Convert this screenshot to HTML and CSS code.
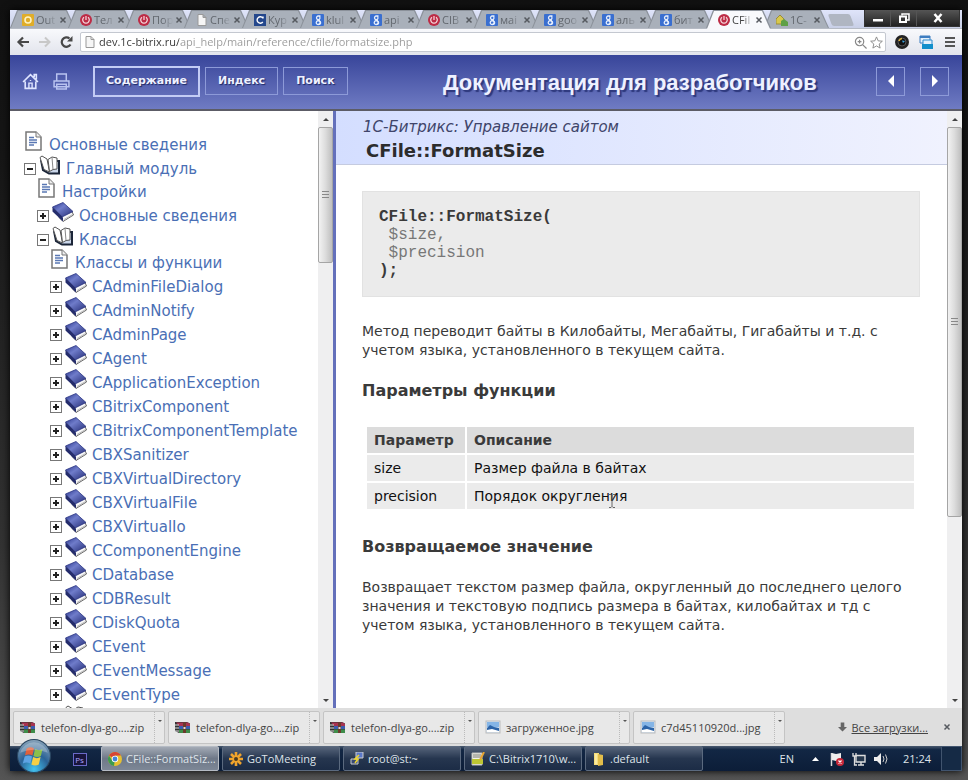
FILE: index.html
```html
<!DOCTYPE html>
<html lang="ru">
<head>
    <meta charset="UTF-8">
    <meta name="viewport" content="width=device-width, initial-scale=1.0">
    <title>CFile::FormatSize</title>
    <link rel="stylesheet" href="styles.css">
</head>
<body>
    <!-- Shared icons -->
    <svg class="sprite" width="0" height="0" aria-hidden="true">
        <defs>
            <linearGradient id="cover" x1="0" y1="0" x2="1" y2="1">
                <stop offset="0" stop-color="#28348c"/>
                <stop offset="0.4" stop-color="#6f7cca"/>
                <stop offset="1" stop-color="#232b74"/>
            </linearGradient>
            <radialGradient id="orb" cx="0.5" cy="0.9" r="0.9">
                <stop offset="0" stop-color="#43c4f0"/>
                <stop offset="0.5" stop-color="#2b6397"/>
                <stop offset="1" stop-color="#8aa5bb"/>
            </radialGradient>
        </defs>
        <symbol id="i-doc" viewBox="0 0 17 20">
            <path d="M1 1h10l5 5v13H1z" fill="#fff" stroke="#777" stroke-width="1.5"/>
            <path d="M11 1v5h5" fill="#eee" stroke="#777"/>
            <path d="M4 6.500h5M4 9h8M4 11.500h8M4 14h5" stroke="#5a78b4" stroke-width="1.300"/>
        </symbol>
        <symbol id="i-book" viewBox="0 0 22 20">
            <path d="M7 15.500L20 9.500l1.500 3.500L11 19.500z" fill="#f8f8f8" stroke="#444" stroke-width="0.800"/>
            <path d="M0.500 5L11 0.500l10 9-11 5.500z" fill="url(#cover)" stroke="#2c3684" stroke-width="0.800"/>
            <path d="M0.500 5v4.500L11 19.500V15.500z" fill="#242c6c"/>
            <path d="M12 17.500l8.500-5" stroke="#aaa" stroke-width="0.800"/>
        </symbol>
        <symbol id="i-open" viewBox="0 0 22 20">
            <path d="M2 5l2 10 6 3.500h10V6h-2" fill="#cbd7ea" stroke="#1b2538" stroke-width="2"/>
            <path d="M1 2.500L3 1l5 3 2.500 13-5.500-2.500z" fill="#fff" stroke="#555"/>
            <path d="M10.500 16.500L9 4.500 13 2l5 1v11l-4 .5z" fill="#fff" stroke="#555"/>
            <path d="M13 2.500l1 12" stroke="#888"/>
        </symbol>
        <symbol id="i-bitrix" viewBox="0 0 12 12">
            <circle cx="6" cy="6" r="6" fill="#bd2c46"/>
            <path d="M4 3.200a3.300 3.300 0 1 0 4 0M6 2v4" fill="none" stroke="#f8dce0" stroke-width="1.200"/>
        </symbol>
        <symbol id="i-google" viewBox="0 0 12 12">
            <rect width="12" height="12" rx="1" fill="#3a6fd0"/>
            <path d="M8.500 2H6.200a1.800 1.800 0 1 0 .3 3.600L6 6.500a2 2 0 1 1-1.500 3.200 2 2 0 0 1 2-3" fill="none" stroke="#e6eefc" stroke-width="1.300"/>
            <path d="M7 2.200a1.800 1.800 0 0 1-.5 3.400L7.800 7.200a1.700 1.700 0 0 1-1.800 3" fill="none" stroke="#e6eefc" stroke-width="1.200"/>
        </symbol>
        <symbol id="i-file" viewBox="0 0 12 12">
            <path d="M2 .5h5L10 3.500v8H2zM7 .5v3h3" fill="#f6f6f6" stroke="#999"/>
        </symbol>
        <symbol id="i-close" viewBox="0 0 8 8">
            <path d="M1.500 1.500l5 5M6.500 1.500l-5 5" stroke="#565a60" stroke-width="1.500"/>
        </symbol>
        <symbol id="i-zip" viewBox="0 0 16 14">
            <path d="M0 2h12l3 1.500v9.500H4L0 11z" fill="#333"/>
            <path d="M1 2.500h12l2 1.500v2H4z" fill="#a83250"/>
            <path d="M4 6h11v3H4z" fill="#3c5cae"/>
            <path d="M4 9.500h11V13H4z" fill="#3f8d4a"/>
            <path d="M0 5h4M0 8h4M0 11h4" stroke="#ddd" stroke-width="1"/>
            <path d="M8 2.500h3V13H8z" fill="#6b3b2c"/>
            <path d="M8.500 7h2v2h-2z" fill="#ddd"/>
        </symbol>
        <symbol id="i-image" viewBox="0 0 16 14">
            <rect x="1" y="1" width="14" height="12" fill="#d8e8f8" stroke="#bbb"/>
            <path d="M2 2h12v5H2z" fill="#85b5e6"/>
            <path d="M2 8l3-3 4 2 5 1v4H2z" fill="#2c64a8"/>
            <path d="M2 10l5-1 7 2v1H2z" fill="#fff"/>
        </symbol>
    </svg>

    <div class="window">
        <div class="tab-strip">
            <div class="tab"><svg class="favicon" viewBox="0 0 12 12"><rect width="12" height="12" rx="1" fill="#e0ad28"/><circle cx="6" cy="6" r="3" fill="none" stroke="#fff3c0" stroke-width="1.600"/></svg><span class="tab-title">Out</span><button class="tab-close" aria-label="Закрыть"><svg><use href="#i-close"/></svg></button></div>
            <div class="tab"><svg class="favicon"><use href="#i-bitrix"/></svg><span class="tab-title">Тел</span><button class="tab-close" aria-label="Закрыть"><svg><use href="#i-close"/></svg></button></div>
            <div class="tab"><svg class="favicon"><use href="#i-bitrix"/></svg><span class="tab-title">Пор</span><button class="tab-close" aria-label="Закрыть"><svg><use href="#i-close"/></svg></button></div>
            <div class="tab"><svg class="favicon"><use href="#i-file"/></svg><span class="tab-title">Спе</span><button class="tab-close" aria-label="Закрыть"><svg><use href="#i-close"/></svg></button></div>
            <div class="tab"><svg class="favicon" viewBox="0 0 12 12"><rect width="12" height="12" fill="#24478c"/><path d="M8.800 4a3.200 3.200 0 1 0 0 4M9 2.500v2" fill="none" stroke="#fff" stroke-width="1.400"/></svg><span class="tab-title">Кур</span><button class="tab-close" aria-label="Закрыть"><svg><use href="#i-close"/></svg></button></div>
            <div class="tab"><svg class="favicon"><use href="#i-google"/></svg><span class="tab-title">klul</span><button class="tab-close" aria-label="Закрыть"><svg><use href="#i-close"/></svg></button></div>
            <div class="tab"><svg class="favicon"><use href="#i-google"/></svg><span class="tab-title">api</span><button class="tab-close" aria-label="Закрыть"><svg><use href="#i-close"/></svg></button></div>
            <div class="tab"><svg class="favicon"><use href="#i-bitrix"/></svg><span class="tab-title">CIB</span><button class="tab-close" aria-label="Закрыть"><svg><use href="#i-close"/></svg></button></div>
            <div class="tab"><svg class="favicon"><use href="#i-google"/></svg><span class="tab-title">маі</span><button class="tab-close" aria-label="Закрыть"><svg><use href="#i-close"/></svg></button></div>
            <div class="tab"><svg class="favicon"><use href="#i-google"/></svg><span class="tab-title">goo</span><button class="tab-close" aria-label="Закрыть"><svg><use href="#i-close"/></svg></button></div>
            <div class="tab"><svg class="favicon"><use href="#i-google"/></svg><span class="tab-title">аль</span><button class="tab-close" aria-label="Закрыть"><svg><use href="#i-close"/></svg></button></div>
            <div class="tab"><svg class="favicon"><use href="#i-google"/></svg><span class="tab-title">бит</span><button class="tab-close" aria-label="Закрыть"><svg><use href="#i-close"/></svg></button></div>
            <div class="tab active"><svg class="favicon"><use href="#i-bitrix"/></svg><span class="tab-title">CFil</span><button class="tab-close" aria-label="Закрыть"><svg><use href="#i-close"/></svg></button></div>
            <div class="tab"><svg class="favicon" viewBox="0 0 12 12"><path d="M0 5l4-4 4 4v5H0z" fill="#d8c84c" stroke="#9a8c3a"/><path d="M5 7l3-2 4 3v4H5z" fill="#5fa046"/></svg><span class="tab-title">1C-</span><button class="tab-close" aria-label="Закрыть"><svg><use href="#i-close"/></svg></button></div>
            <button class="new-tab" aria-label="Новая вкладка"></button>
            <div class="window-controls">
                <button aria-label="Свернуть"><svg viewBox="0 0 12 10"><path d="M1 6h10v2.500H1z" fill="#fff"/></svg></button>
                <button aria-label="Развернуть"><svg viewBox="0 0 12 10"><path d="M4 2.500V1h7v6H9" fill="none" stroke="#fff" stroke-width="1.500"/><path d="M2 3.500h6V9H2z" fill="none" stroke="#fff" stroke-width="2"/></svg></button>
                <button class="wide" aria-label="Закрыть окно"><svg viewBox="0 0 12 10"><path d="M2.500 1l7 8M9.500 1l-7 8" stroke="#fff" stroke-width="2.500"/></svg></button>
            </div>
        </div>

        <div class="toolbar">
            <button class="nav-button" aria-label="Назад"><svg viewBox="0 0 14 12"><path d="M13 6H3M7 1.500L2.500 6 7 10.500" fill="none" stroke="#484848" stroke-width="2.200"/></svg></button>
            <button class="nav-button" aria-label="Вперёд"><svg viewBox="0 0 14 12"><path d="M1 6h10M7 1.500L11.500 6 7 10.500" fill="none" stroke="#c8c8c8" stroke-width="2"/></svg></button>
            <button class="nav-button" aria-label="Обновить"><svg viewBox="0 0 14 12"><path d="M10.500 8.500A4.700 4.700 0 1 1 9.500 2.500" fill="none" stroke="#484848" stroke-width="2.200"/><path d="M12.500 0v5.500H7z" fill="#484848"/></svg></button>
            <div class="omnibox">
                <svg class="favicon"><use href="#i-file"/></svg>
                <input class="url" type="text" aria-label="Адрес" value="dev.1c-bitrix.ru/api_help/main/reference/cfile/formatsize.php">
                <svg class="omni-icon" viewBox="0 0 14 14"><circle cx="6" cy="6" r="4.500" fill="none" stroke="#888" stroke-width="1.300"/><path d="M9.500 9.500l4 4M4 6h4M6 4v4" stroke="#888" stroke-width="1.300"/></svg>
                <svg class="omni-icon" viewBox="0 0 14 14"><path d="M7 1l1.800 4.200 4.500.4-3.400 3 1 4.400L7 10.700 3.100 13l1-4.400-3.400-3 4.500-.4z" fill="#fff" stroke="#888"/></svg>
            </div>
            <button class="extension" aria-label="Камера"><svg viewBox="0 0 14 14"><circle cx="7" cy="7" r="7" fill="#222"/><circle cx="7" cy="7" r="4" fill="#111" stroke="#555"/><path d="M4 6a3.500 3.500 0 0 1 3-2.500" stroke="#e4b640" stroke-width="1.500" fill="none"/><path d="M7 5.500l3 .5-2 2z" fill="#3ca4e0"/></svg></button>
            <button class="extension" aria-label="Окна"><svg viewBox="0 0 14 14"><path d="M1 1h10v7H1z" fill="#e4f0fb" stroke="#3d7cc0"/><path d="M1 1h10v2H1z" fill="#3d7cc0"/><path d="M4 5h9v7H4z" fill="#e4f0fb" stroke="#2e8dce"/><path d="M3 9h11v5H3z" fill="#128fcb"/></svg></button>
            <button class="extension" aria-label="Меню"><svg viewBox="0 0 14 14"><path d="M2 3h10M2 7h10M2 11h10" stroke="#555" stroke-width="2.200"/></svg></button>
        </div>

        <header class="site-header">
            <a class="header-icon" href="#" aria-label="Главная"><svg viewBox="0 0 16 16"><path d="M1 8.500L8 1.500l7 7M3 8v6.500h10V8M11.500 4V1.500h2V6" fill="none" stroke="#dfe5ff" stroke-width="1.500"/><path d="M6.500 14V9.500h3V14M8 6.500v1" fill="none" stroke="#dfe5ff" stroke-width="1.300"/></svg></a>
            <a class="header-icon" href="#" aria-label="Печать"><svg viewBox="0 0 16 16"><path d="M3.500 7V1h9v6M1 7.500h14v5.500H1zM3.500 10.500h9V15h-9z" fill="none" stroke="#b9c3f0" stroke-width="1.400"/></svg></a>
            <button class="header-button selected">Содержание</button>
            <button class="header-button">Индекс</button>
            <button class="header-button">Поиск</button>
            <h2 class="site-title">Документация для разработчиков</h2>
            <button class="page-arrow" aria-label="Предыдущая"><svg viewBox="0 0 8 12"><path d="M7 0v12L1 6z" fill="#fff"/></svg></button>
            <button class="page-arrow" aria-label="Следующая"><svg viewBox="0 0 8 12"><path d="M1 0v12l6-6z" fill="#fff"/></svg></button>
        </header>

        <div class="content">
            <nav class="sidebar">
                <ul class="tree">
                    <li><div class="row"><svg class="doc"><use href="#i-doc"/></svg><a href="#">Основные сведения</a></div></li>
                    <li>
                        <div class="row"><button class="toggle minus" aria-label="Свернуть"></button><svg class="book"><use href="#i-open"/></svg><a href="#">Главный модуль</a></div>
                        <ul>
                            <li><div class="row"><svg class="doc"><use href="#i-doc"/></svg><a href="#">Настройки</a></div></li>
                            <li><div class="row"><button class="toggle" aria-label="Развернуть"></button><svg class="book"><use href="#i-book"/></svg><a href="#">Основные сведения</a></div></li>
                            <li>
                                <div class="row"><button class="toggle minus" aria-label="Свернуть"></button><svg class="book"><use href="#i-open"/></svg><a href="#">Классы</a></div>
                                <ul>
                                    <li><div class="row"><svg class="doc"><use href="#i-doc"/></svg><a href="#">Классы и функции</a></div></li>
                                    <li><div class="row"><button class="toggle" aria-label="Развернуть"></button><svg class="book"><use href="#i-book"/></svg><a href="#">CAdminFileDialog</a></div></li>
                                    <li><div class="row"><button class="toggle" aria-label="Развернуть"></button><svg class="book"><use href="#i-book"/></svg><a href="#">CAdminNotify</a></div></li>
                                    <li><div class="row"><button class="toggle" aria-label="Развернуть"></button><svg class="book"><use href="#i-book"/></svg><a href="#">CAdminPage</a></div></li>
                                    <li><div class="row"><button class="toggle" aria-label="Развернуть"></button><svg class="book"><use href="#i-book"/></svg><a href="#">CAgent</a></div></li>
                                    <li><div class="row"><button class="toggle" aria-label="Развернуть"></button><svg class="book"><use href="#i-book"/></svg><a href="#">CApplicationException</a></div></li>
                                    <li><div class="row"><button class="toggle" aria-label="Развернуть"></button><svg class="book"><use href="#i-book"/></svg><a href="#">CBitrixComponent</a></div></li>
                                    <li><div class="row"><button class="toggle" aria-label="Развернуть"></button><svg class="book"><use href="#i-book"/></svg><a href="#">CBitrixComponentTemplate</a></div></li>
                                    <li><div class="row"><button class="toggle" aria-label="Развернуть"></button><svg class="book"><use href="#i-book"/></svg><a href="#">CBXSanitizer</a></div></li>
                                    <li><div class="row"><button class="toggle" aria-label="Развернуть"></button><svg class="book"><use href="#i-book"/></svg><a href="#">CBXVirtualDirectory</a></div></li>
                                    <li><div class="row"><button class="toggle" aria-label="Развернуть"></button><svg class="book"><use href="#i-book"/></svg><a href="#">CBXVirtualFile</a></div></li>
                                    <li><div class="row"><button class="toggle" aria-label="Развернуть"></button><svg class="book"><use href="#i-book"/></svg><a href="#">CBXVirtualIo</a></div></li>
                                    <li><div class="row"><button class="toggle" aria-label="Развернуть"></button><svg class="book"><use href="#i-book"/></svg><a href="#">CComponentEngine</a></div></li>
                                    <li><div class="row"><button class="toggle" aria-label="Развернуть"></button><svg class="book"><use href="#i-book"/></svg><a href="#">CDatabase</a></div></li>
                                    <li><div class="row"><button class="toggle" aria-label="Развернуть"></button><svg class="book"><use href="#i-book"/></svg><a href="#">CDBResult</a></div></li>
                                    <li><div class="row"><button class="toggle" aria-label="Развернуть"></button><svg class="book"><use href="#i-book"/></svg><a href="#">CDiskQuota</a></div></li>
                                    <li><div class="row"><button class="toggle" aria-label="Развернуть"></button><svg class="book"><use href="#i-book"/></svg><a href="#">CEvent</a></div></li>
                                    <li><div class="row"><button class="toggle" aria-label="Развернуть"></button><svg class="book"><use href="#i-book"/></svg><a href="#">CEventMessage</a></div></li>
                                    <li><div class="row"><button class="toggle" aria-label="Развернуть"></button><svg class="book"><use href="#i-book"/></svg><a href="#">CEventType</a></div></li>
                                    <li><div class="row"><button class="toggle minus" aria-label="Свернуть"></button><svg class="book"><use href="#i-open"/></svg></div></li>
                                </ul>
                            </li>
                        </ul>
                    </li>
                </ul>
            </nav>
            <div class="scrollbar"><span class="arrow up"></span><div class="track"><div class="thumb short"></div></div><span class="arrow down"></span></div>

            <main class="page">
                <div class="page-head">
                    <p class="product">1С-Битрикс: Управление сайтом</p>
                    <h1>CFile::FormatSize</h1>
                </div>
                <article class="article">
                    <pre class="syntax"><b>CFile::FormatSize(</b>
 $size,
 $precision
<b>);</b></pre>
                    <p>Метод переводит байты в Килобайты, Мегабайты, Гигабайты и т.д. с учетом языка, установленного в текущем сайта.</p>
                    <h3>Параметры функции</h3>
                    <table class="params">
                        <tr><th>Параметр</th><th>Описание</th></tr>
                        <tr><td>size</td><td>Размер файла в байтах</td></tr>
                        <tr><td>precision</td><td><span class="pointed">Порядок округления<svg class="cursor" viewBox="0 0 6 14"><path d="M0 .5h2l1 1 1-1h2M0 13.500h2l1-1 1 1h2M3 1.500v11" fill="none" stroke="#666"/></svg></span></td></tr>
                    </table>
                    <h3>Возвращаемое значение</h3>
                    <p>Возвращает текстом размер файла, округленный до последнего целого значения и текстовую подпись размера в байтах, килобайтах и тд с учетом языка, установленного в текущем сайта.</p>
                </article>
            </main>
            <div class="scrollbar"><span class="arrow up"></span><div class="track"><div class="thumb long"></div></div><span class="arrow down"></span></div>
        </div>

        <div class="downloads">
            <div class="download"><svg><use href="#i-zip"/></svg><span>telefon-dlya-go....zip</span><button aria-label="Действия"></button></div>
            <div class="download"><svg><use href="#i-zip"/></svg><span>telefon-dlya-go....zip</span><button aria-label="Действия"></button></div>
            <div class="download"><svg><use href="#i-zip"/></svg><span>telefon-dlya-go....zip</span><button aria-label="Действия"></button></div>
            <div class="download"><svg><use href="#i-image"/></svg><span>загруженное.jpg</span><button aria-label="Действия"></button></div>
            <div class="download"><svg><use href="#i-image"/></svg><span>c7d45110920d...jpg</span><button aria-label="Действия"></button></div>
            <svg class="down-arrow" viewBox="0 0 10 10"><path d="M3 0h4v5h3L5 10 0 5h3z" fill="#666"/></svg>
            <a class="all-downloads" href="#">Все загрузки...</a>
            <button class="tab-close" aria-label="Закрыть панель"><svg><use href="#i-close"/></svg></button>
        </div>

        <div class="taskbar">
            <button class="start" aria-label="Пуск"><svg viewBox="0 0 32 32"><circle cx="16" cy="16" r="15.500" fill="url(#orb)" stroke="#2a4660"/><path d="M9 9q4-2.500 7 0l-1.500 6.500q-3.500-2-7 0z" fill="#e2603a"/><path d="M17 9.500q4 2 7 0L22.500 16q-3.500 2-7 0z" fill="#8cc04a"/><path d="M7.200 16.500q3.500-2 7 0L12.500 23q-3.500-2-7 0z" fill="#5ea4e4"/><path d="M15.200 17q3.500 2 7 0L20.500 24q-3.500 2-7 0z" fill="#f6cf45"/><path d="M3 13a13.500 13.500 0 0 1 26 0q-13-6-26 0z" fill="#fff" opacity="0.250"/></svg></button>
            <button class="pinned" aria-label="Photoshop"><span>Ps</span></button>
            <button class="task current"><svg viewBox="0 0 14 14"><circle cx="7" cy="7" r="7" fill="#e5c032"/><path d="M7 7L1 3.400A7 7 0 0 1 13 3.500H7z" fill="#d64535"/><path d="M7 7l-1 7A7 7 0 0 1 1 3.400L4.200 8.500z" fill="#3c9b50"/><circle cx="7" cy="7" r="3.200" fill="#fff"/><circle cx="7" cy="7" r="2.400" fill="#4383d8"/></svg><span>CFile::FormatSiz...</span></button>
            <button class="task"><svg viewBox="0 0 14 14"><path d="M7 0v14M0 7h14M2 2l10 10M12 2L2 12" stroke="#f0a42c" stroke-width="2.600"/><circle cx="7" cy="7" r="2" fill="#4a3c22"/></svg><span>GoToMeeting</span></button>
            <button class="task"><svg viewBox="0 0 14 14"><path d="M6 0h7v6H6z" fill="#5a78c8" stroke="#ccc"/><path d="M1 7h7v5H1z" fill="#384a74" stroke="#ccc"/><path d="M9 3L5 7h3l-3 4" fill="none" stroke="#f2d72e" stroke-width="1.500"/></svg><span>root@st:~</span></button>
            <button class="task"><svg viewBox="0 0 14 14"><path d="M1 1h10v12H1z" fill="#f3f3e4" stroke="#bbb"/><path d="M1 7h11v5H1z" fill="#bcc634"/><path d="M2 3h8M2 5h8" stroke="#777"/><path d="M13 0L9 8" stroke="#e7a430" stroke-width="2"/></svg><span>C:\Bitrix1710\w...</span></button>
            <button class="task"><svg viewBox="0 0 14 14"><path d="M2 1h5v12H2z" fill="#f5dd7a"/><path d="M6 2l5 1v10l-5 1z" fill="#e2bd4a"/><path d="M4 2v10" stroke="#fff6c8"/></svg><span>.default</span></button>
            <div class="tray">
                <span class="lang">EN</span>
                <svg viewBox="0 0 14 14"><path d="M4 9l3.500-4L11 9z" fill="#fff"/></svg>
                <svg viewBox="0 0 14 14"><path d="M1.500 1v13" stroke="#ddd" stroke-width="1.500"/><path d="M2 1l4 1 5-1v7l-5 1-4-1z" fill="#eee"/><circle cx="10" cy="10" r="4" fill="#c8283a"/><path d="M8.500 8.500l3 3M11.500 8.500l-3 3" stroke="#fff" stroke-width="1.200"/></svg>
                <svg viewBox="0 0 14 14"><path d="M4 3.500h9V10H4zM6 13h6M9 10v3" fill="#26384e" stroke="#ddd" stroke-width="1.400"/><path d="M1 1v3h3V1M2.500 4v9H5" fill="none" stroke="#ddd" stroke-width="1.300"/></svg>
                <svg viewBox="0 0 14 14"><path d="M0 5h3l4-4v12L3 9H0z" fill="#eee"/><path d="M9 4q2 3 0 6M11.500 2.500q3 4.500 0 9" fill="none" stroke="#ccc"/></svg>
                <span class="clock">21:24</span>
            </div>
            <button class="show-desktop" aria-label="Показать рабочий стол"></button>
        </div>
    </div>
</body>
</html>
```

FILE: styles.css
```css
:root {
    --link: #4a6fb5;
    --text: #3a3a3a;
    --header-top: #38459a;
    --header-bottom: #6f7bc3;
    --box: #ebebeb;
    --ui-font: "Open Sans", "Noto Sans", sans-serif;
    --page-font: "DejaVu Sans", Verdana, sans-serif;
}

* {
    margin: 0;
    padding: 0;
    box-sizing: border-box;
}

body {
    height: 100vh;
    padding: 10px 6px 9px 10px;
    background: linear-gradient(#111, #161616 20%, #333 70%, #555);
    font-family: var(--ui-font);
    font-size: 11px;
    overflow: hidden;
}

button {
    border: 0;
    background: none;
    font: inherit;
    color: inherit;
    cursor: pointer;
}

.sprite {
    position: absolute;
}

.window {
    display: flex;
    flex-direction: column;
    height: 100%;
    box-shadow: 0 0 8px #000;
}

/* Browser tabs */
.tab-strip {
    display: flex;
    height: 19px;
    padding-left: 2px;
    background: linear-gradient(#dfe4fa, #c8cfe6);
    border-bottom: 1px solid #b5bac4;
}

.tab {
    position: relative;
    z-index: 0;
    display: flex;
    align-items: center;
    gap: 2px;
    width: 58px;
    padding: 2px 4px 0 10px;
    color: #62676e;
}

.tab::before,
.tab::after {
    content: "";
    position: absolute;
    z-index: -1;
    top: 0;
    bottom: 0;
    left: -2px;
    right: -5px;
    background: #8b919a;
    clip-path: polygon(0 100%, 7px 0, calc(100% - 8px) 0, 100% 100%);
}

.tab::after {
    top: 1px;
    left: -1px;
    right: -4px;
    background: #a9b0ba;
}

.tab.active {
    z-index: 1;
    color: #444;
}

.tab.active::after {
    background: #f8f9fc;
    bottom: -1px;
}

.favicon {
    flex: none;
    width: 12px;
    height: 12px;
}

.tab-title {
    flex: none;
    min-width: 21px;
    white-space: nowrap;
    line-height: 16px;
    -webkit-mask-image: linear-gradient(90deg, #000 50%, transparent);
    mask-image: linear-gradient(90deg, #000 50%, transparent);
}

.tab-close {
    flex: none;
    width: 8px;
    height: 8px;
    line-height: 0;
}

.tab-close svg {
    width: 8px;
    height: 8px;
}

.new-tab {
    width: 22px;
    height: 12px;
    margin: 4px 0 0 6px;
    border-radius: 2px;
    background: #b0b6c2;
    transform: skewX(20deg);
}

.window-controls {
    display: flex;
    margin-left: auto;
    margin-right: 2px;
    height: 17px;
    background: linear-gradient(#555, #222);
    border: 1px solid #333;
    border-top: 0;
}

.window-controls button {
    width: 26px;
    border-right: 1px solid #555;
}

.window-controls .wide {
    width: 42px;
    border-right: 0;
}

.window-controls svg {
    width: 12px;
    height: 10px;
}

/* Address bar */
.toolbar {
    display: flex;
    align-items: center;
    height: 26px;
    padding: 0 0 0 2px;
    background: linear-gradient(#f8f9fc, #e2e4ec);
}

.nav-button {
    width: 22px;
    height: 20px;
    line-height: 0;
}

.nav-button svg {
    width: 14px;
    height: 12px;
}

.omnibox {
    display: flex;
    flex: 1;
    align-items: center;
    gap: 3px;
    height: 20px;
    margin: 0 4px 0 2px;
    padding: 0 2px 0 3px;
    background: #fff;
    border: 1px solid #c4c8d0;
    border-radius: 2px;
}

/* host part is dark, the path after it is grey */
.url {
    flex: 1;
    border: 0;
    outline: 0;
    font: 11px/18px var(--ui-font);
    background: linear-gradient(90deg, #333 80px, #999 80px);
    -webkit-background-clip: text;
    background-clip: text;
    -webkit-text-fill-color: transparent;
}

.omni-icon {
    width: 13px;
    height: 13px;
}

.extension {
    width: 24px;
    line-height: 0;
}

.extension svg {
    width: 14px;
    height: 14px;
}

/* Documentation header */
.site-header {
    display: flex;
    align-items: center;
    gap: 5px;
    height: 56px;
    padding: 0 13px 2px 12px;
    background: linear-gradient(var(--header-top), var(--header-bottom));
    border-bottom: 2px solid #5c5c66;
    color: #eef1ff;
}

.header-icon {
    width: 26px;
    line-height: 0;
}

.header-icon svg {
    width: 17px;
    height: 17px;
}

.header-button {
    height: 28px;
    padding: 0 12px;
    border: 1px solid #8d9ad8;
    font: bold 11px/26px var(--page-font);
    text-shadow: 1px 1px 1px #1e2864;
}

.header-button.selected {
    height: 31px;
    padding: 0 11px;
    margin-left: 9px;
    border: 2px solid #c3ccf5;
}

.site-title {
    flex: 1;
    padding: 4px 0 0 36px;
    font: bold 22px/28px "Liberation Sans", Arial, sans-serif;
    text-align: center;
    white-space: nowrap;
    text-shadow: 2px 2px 1px #2d387c;
}

.page-arrow {
    width: 29px;
    height: 29px;
    border: 1px solid #8d9ad8;
    line-height: 0;
}

.page-arrow + .page-arrow {
    margin-left: 10px;
}

.page-arrow svg {
    width: 8px;
    height: 12px;
}

/* Frames */
.content {
    display: flex;
    flex: 1;
    min-height: 0;
    background: #fff;
}

.sidebar {
    width: 308px;
    padding: 22px 0 0 14px;
    overflow: hidden;
}

.tree,
.tree ul {
    list-style: none;
}

.tree ul {
    margin-top: -1px;
    padding-left: 13px;
}

.row {
    display: flex;
    align-items: center;
    height: 24px;
    font: 15px/24px var(--page-font);
    white-space: nowrap;
}

.row a {
    color: var(--link);
    text-decoration: none;
}

.row a:hover {
    text-decoration: underline;
}

.doc {
    width: 17px;
    height: 20px;
    margin: 0 7px 8px 1px;
}

.book {
    width: 22px;
    height: 20px;
    margin: 0 5px 9px 3px;
}

.toggle {
    flex: none;
    width: 12px;
    height: 12px;
    border: 1px solid #777;
    background:
        linear-gradient(#222, #222) center / 6px 2px no-repeat,
        linear-gradient(#222, #222) center / 2px 6px no-repeat,
        #fff;
}

.toggle.minus {
    background: linear-gradient(#222, #222) center / 6px 2px no-repeat, #fff;
}

.scrollbar {
    display: flex;
    flex-direction: column;
    flex: none;
    width: 15px;
    background: #efeff0;
}

.sidebar + .scrollbar {
    width: 18px;
    border-right: 3px solid #6470bb;
}

.arrow {
    height: 16px;
    display: flex;
    align-items: center;
    justify-content: center;
}

.arrow::before {
    content: "";
    border: 3px solid transparent;
}

.arrow.up::before {
    border-top: 0;
    border-bottom-color: #444;
}

.arrow.down::before {
    border-bottom: 0;
    border-top-color: #444;
}

.track {
    flex: 1;
}

.thumb {
    display: flex;
    align-items: center;
    justify-content: center;
    border: 1px solid #a5a5a5;
    border-radius: 2px;
    background: linear-gradient(90deg, #f2f2f2, #dcdcdc 50%, #bfbfbf);
}

.thumb::before {
    content: "";
    width: 7px;
    height: 8px;
    background: repeating-linear-gradient(#888 0 1px, transparent 1px 3px);
}

.thumb.short {
    height: 24%;
}

.thumb.long {
    height: 69%;
}

/* Article */
.page {
    flex: 1;
    min-width: 0;
    overflow: hidden;
    font-family: var(--page-font);
    color: var(--text);
}

.page-head {
    height: 54px;
    padding: 6px 27px 0;
    background: linear-gradient(90deg, #d4deff, #f0f2fe);
    border-bottom: 1px solid #c5cbe0;
}

.product {
    font-size: 15px;
    line-height: 20px;
    font-style: italic;
    color: #40456a;
}

.page-head h1 {
    padding-left: 3px;
    font-size: 18px;
    line-height: 27px;
    color: #2c2c2c;
}

.article {
    padding: 26px 27px 0 26px;
}

.syntax {
    padding: 16px;
    margin-bottom: 25px;
    background: var(--box);
    border: 1px solid #e2e2e2;
    font: 16px/18px "Liberation Mono", "Courier New", monospace;
    color: #777;
}

.syntax b {
    color: var(--text);
}

.article p {
    font-size: 14px;
    line-height: 19px;
}

.article h3 {
    margin: 20px 0;
    font-size: 16px;
    line-height: 22px;
}

.params {
    width: calc(100% - 7px);
    margin: 23px 3px 25px;
    border-spacing: 2px;
    font-size: 14px;
    line-height: 18px;
    color: #111;
}

.params th,
.params td {
    padding: 4px 7px;
    background: var(--box);
    text-align: left;
}

.params th {
    background: #dcdcdc;
    color: var(--text);
}

.params th:first-child {
    width: 98px;
}

.pointed {
    position: relative;
}

.cursor {
    position: absolute;
    right: 12px;
    top: 6px;
    width: 6px;
    height: 14px;
}

/* Downloads */
.downloads {
    display: flex;
    align-items: center;
    gap: 3px;
    height: 38px;
    padding: 0 11px 0 3px;
    background: #dedede;
    color: #444;
}

.download {
    display: flex;
    align-items: center;
    width: 152px;
    height: 33px;
    padding-left: 6px;
    background: #e8e8e8;
    border: 1px solid #c4c4c4;
    border-radius: 2px;
}

.download svg {
    width: 16px;
    height: 14px;
}

.download span {
    flex: 1;
    padding-left: 5px;
    white-space: nowrap;
}

.download button {
    display: flex;
    align-items: flex-start;
    justify-content: center;
    align-self: stretch;
    width: 10px;
    padding-top: 8px;
    border-left: 1px dotted #bbb;
}

.download button::before {
    content: "";
    border: 2px solid transparent;
    border-top-color: #555;
}

.down-arrow {
    width: 9px;
    height: 10px;
    margin-left: auto;
}

.all-downloads {
    margin: 0 12px 0 2px;
    color: #444;
    white-space: nowrap;
}

/* Taskbar */
.taskbar {
    display: flex;
    height: 25px;
    padding-left: 7px;
    background: linear-gradient(#4a5a70, #122744 15%, #0c1d38);
    color: #dfe4ea;
}

.start {
    width: 34px;
    height: 34px;
    margin-top: -7px;
    z-index: 1;
    line-height: 0;
}

.start svg {
    width: 34px;
    height: 34px;
}

.pinned {
    width: 50px;
    padding-left: 7px;
}

.pinned span {
    display: inline-block;
    width: 14px;
    border: 1px solid #6a6ac8;
    background: #18153c;
    font-size: 8px;
    line-height: 11px;
    color: #a9a4ff;
}

.task {
    display: flex;
    align-items: center;
    gap: 4px;
    width: 118px;
    margin-right: 3px;
    padding: 0 6px;
    border: 1px solid #5b6a7f;
    border-radius: 2px;
    background: linear-gradient(#56647a, #26364f 50%, #1c2c46);
    white-space: nowrap;
}

.task.current {
    background: linear-gradient(#a3aab5, #6e7888 50%, #7d8796);
    border-color: #b5bbc4;
}

.task svg {
    flex: none;
    width: 14px;
    height: 14px;
}

.tray {
    display: flex;
    align-items: center;
    gap: 8px;
    margin-left: auto;
    padding-right: 10px;
}

.tray svg {
    width: 14px;
    height: 14px;
}

.lang {
    margin-right: 6px;
}

.clock {
    margin-left: 7px;
}

.show-desktop {
    width: 21px;
    border: 1px solid #41546e;
    background: #152a45;
}
```
